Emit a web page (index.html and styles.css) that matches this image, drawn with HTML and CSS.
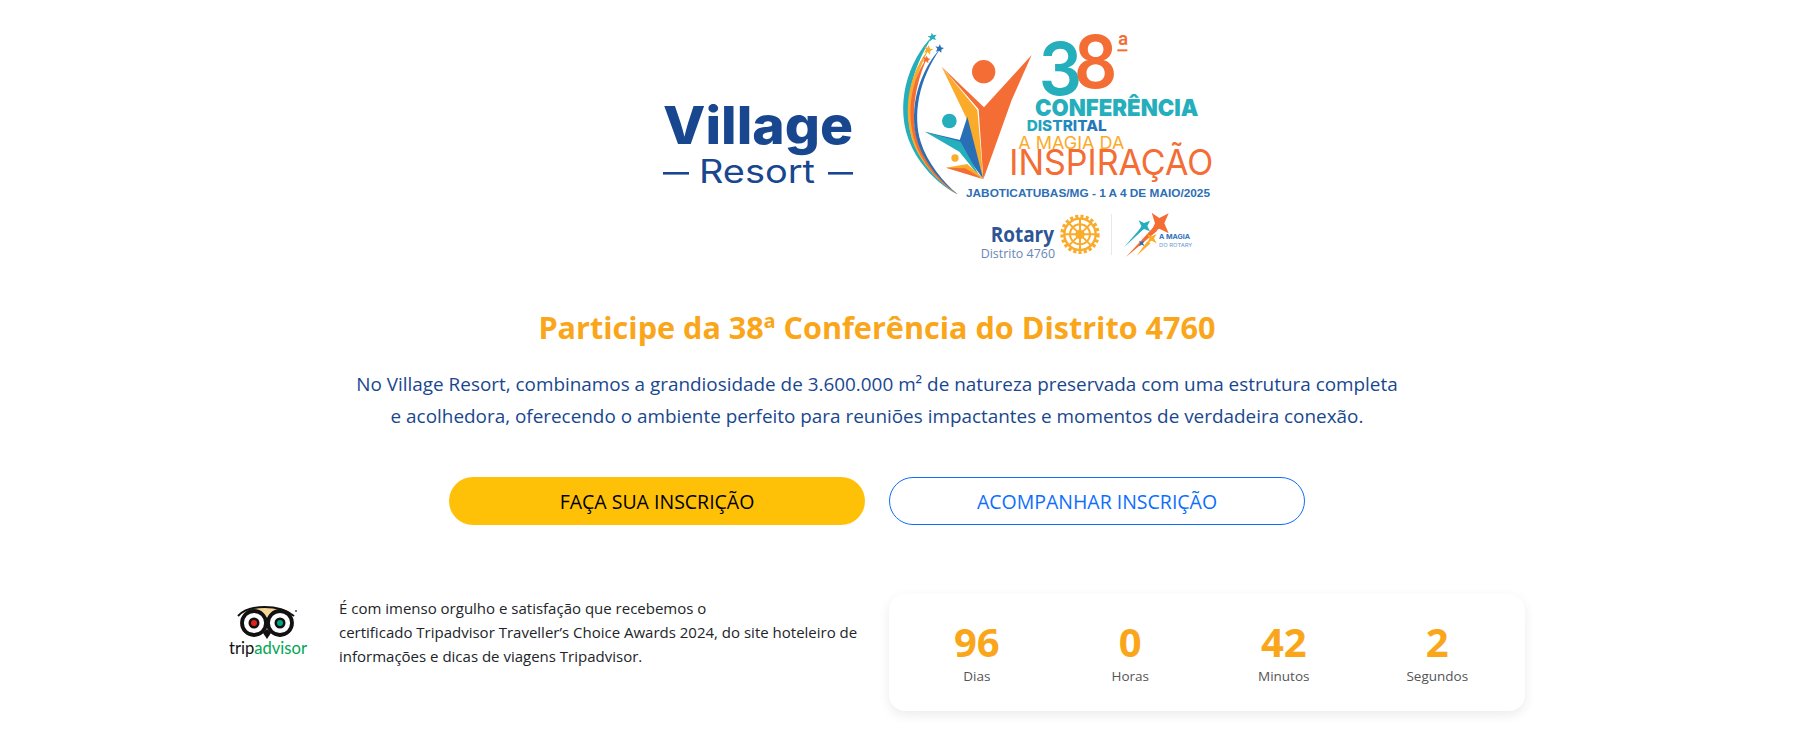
FILE: index.html
```html
<!DOCTYPE html>
<html lang="pt-BR">
<head>
<meta charset="utf-8">
<title>Village Resort</title>
<link rel="stylesheet" href="styles.css">
</head>
<body>
<main class="page">
  <header class="two-cols logos">
    <div class="col-left">
      <svg class="logo-village" viewBox="0 0 205 90" width="205" height="90">
        <text class="lv-title" x="8" y="58" textLength="190" lengthAdjust="spacingAndGlyphs">Village</text>
        <text class="lv-sub" x="44" y="97" textLength="116" lengthAdjust="spacingAndGlyphs">Resort</text>
        <rect class="lv-fill" x="8" y="86" width="26" height="2.6"/>
        <rect class="lv-fill" x="173" y="86" width="25" height="2.6"/>
      </svg>
    </div>
    <div class="col-right">
      <svg class="logo-conf" viewBox="0 0 1020 720" width="340" height="240">
        <defs>
          <linearGradient id="dist" x1="0" x2="1" y1="0" y2="0">
            <stop offset="0" stop-color="#25aebc"/><stop offset="0.55" stop-color="#1f86bd"/><stop offset="1" stop-color="#2a6fb6"/>
          </linearGradient>
        </defs>
        <path fill="#25aebc" d="M158,48 C85,120 38,260 95,380 C125,445 185,500 233,523 C175,480 122,430 98,360 C68,265 92,150 158,48Z"/>
        <path fill="#fbab2a" d="M148,85 C95,150 60,260 102,375 C130,440 185,495 233,523 C180,480 130,430 108,365 C78,275 100,175 148,85Z"/>
        <path fill="#f46d35" d="M142,112 C100,170 72,270 108,375 C130,435 185,495 233,523 C185,485 136,430 114,365 C90,285 105,195 142,112Z"/>
        <path fill="#2a6fb6" d="M182,85 C125,145 80,260 114,370 C135,430 185,490 233,523 C190,485 142,430 122,365 C98,285 115,180 182,85Z"/>
        <polygon fill="#25aebc" points="155,38 160,46 170,44 164,52 168,60 158,57 150,64 151,54 143,49 153,47"/>
        <polygon fill="#fbab2a" points="146,76 150,86 160,88 151,93 150,104 143,96 132,98 138,89 133,80 142,83"/>
        <polygon fill="#2a6fb6" points="180,73 183,82 192,84 184,89 184,98 177,92 168,95 172,86 166,79 175,81"/>
        <polygon fill="#f46d35" points="140,108 144,115 152,117 145,121 145,130 138,124 130,126 133,118 128,112 136,113"/>
        <circle cx="311" cy="155" r="35" fill="#f46d35"/>
        <circle cx="208" cy="303" r="22" fill="#25aebc"/>
        <circle cx="225" cy="414" r="11" fill="#fbab2a"/>
        <polygon fill="#f46d35" points="455,105 395,240 345,380 310,478 296,268 185,140 312,262"/>
        <polygon fill="#fbab2a" points="185,140 292,270 310,478 258,292"/>
        <polygon fill="#2a6fb6" points="262,290 310,478 238,378 240,358"/>
        <polygon fill="#2a6fb6" points="135,335 250,362 245,385"/>
        <polygon fill="#25aebc" points="135,335 242,365 300,472 238,395"/>
        <polygon fill="#fbab2a" points="198,443 262,432 310,475"/>
        <polygon fill="#f46d35" points="198,443 256,445 310,478"/>
        <text class="cf c-teal f-num" x="476" y="226" textLength="130" lengthAdjust="spacingAndGlyphs">3</text>
        <text class="cf c-orange f-num" x="582" y="204" textLength="130" lengthAdjust="spacingAndGlyphs">8</text>
        <text class="cf c-orange f-ord" x="711" y="103">ª</text>
        <rect x="712" y="88" width="30" height="6" fill="#f46d35"/>
        <text class="cf c-teal f-conf" x="465" y="287" textLength="490" lengthAdjust="spacingAndGlyphs">CONFERÊNCIA</text>
        <text class="cf f-dist" x="440" y="333" textLength="240" lengthAdjust="spacingAndGlyphs" fill="url(#dist)">DISTRITAL</text>
        <text class="cf c-yellow f-magia" x="415" y="386" textLength="318" lengthAdjust="spacingAndGlyphs">A MAGIA DA</text>
        <text class="cf c-orange f-insp" x="388" y="466" textLength="612" lengthAdjust="spacingAndGlyphs">INSPIRAÇÃO</text>
        <text class="cf f-date" x="258" y="530" textLength="732" lengthAdjust="spacingAndGlyphs">JABOTICATUBAS/MG - 1 A 4 DE MAIO/2025</text>
        <text class="cf f-rot" x="332" y="665" textLength="190" lengthAdjust="spacingAndGlyphs">Rotary</text>
        <text class="cf f-dis" x="302" y="715" textLength="223" lengthAdjust="spacingAndGlyphs">Distrito 4760</text>
        <g fill="none" stroke="#fbab2a">
          <circle cx="600" cy="643" r="52" stroke-width="14" stroke-dasharray="9 6.3" />
          <circle cx="600" cy="643" r="47" stroke-width="7"/>
          <circle cx="600" cy="643" r="30" stroke-width="6"/>
          <circle cx="600" cy="643" r="11" stroke-width="6"/>
          <path stroke-width="6" d="M600,596V690M553,643H647M567,610L633,676M633,610L567,676"/>
        </g>
        <rect x="694" y="582" width="2" height="123" fill="#ddd"/>
        <path fill="#25aebc" d="M784,622 L792,626 L732,682Z"/>
        <path fill="#f46d35" d="M820,622 L832,632 L737,712Z"/>
        <path fill="#fbab2a" d="M802,664 L812,670 L770,707Z"/>
        <polygon fill="#f46d35" points="815,578 838,594 866,580 853,610 866,640 838,626 810,642 825,610"/>
        <polygon fill="#25aebc" points="776,601 792,609 810,602 802,618 810,634 792,627 776,635 784,618"/>
        <polygon fill="#fbab2a" points="802,642 815,649 830,642 822,655 830,670 815,662 802,670 808,655"/>
        <polygon fill="#2a6fb6" points="777,662 785,666 793,662 789,670 793,678 785,674 777,678 781,670"/>
        <text class="cf f-m1" x="837" y="658" textLength="93" lengthAdjust="spacingAndGlyphs">A MAGIA</text>
        <text class="cf f-m2" x="837" y="680" textLength="100" lengthAdjust="spacingAndGlyphs">DO ROTARY</text>
      </svg>
    </div>
  </header>

  <section class="intro">
    <h1 class="title">Participe da 38ª Conferência do Distrito 4760</h1>
    <p class="lead">No Village Resort, combinamos a grandiosidade de 3.600.000 m² de natureza preservada com uma estrutura completa<br>e acolhedora, oferecendo o ambiente perfeito para reuniões impactantes e momentos de verdadeira conexão.</p>
  </section>

  <section class="two-cols actions">
    <div class="col-left"><a class="btn btn-primary" href="#">FAÇA SUA INSCRIÇÃO</a></div>
    <div class="col-right"><a class="btn btn-outline" href="#">ACOMPANHAR INSCRIÇÃO</a></div>
  </section>

  <section class="two-cols bottom">
    <div class="award">
      <svg class="ta-logo" viewBox="0 0 78 50" width="78" height="50">
        <path fill="#f6d596" d="M13,15 C22,8 48,8 62,15 L50,28 L38,34 L26,28Z"/>
        <path fill="none" stroke="#111" stroke-width="2" d="M9,19 C20,7 50,7 65,19"/>
        <circle cx="25" cy="26" r="12" fill="#fff" stroke="#111" stroke-width="3.8"/>
        <circle cx="51" cy="26" r="12" fill="#fff" stroke="#111" stroke-width="3.8"/>
        <path fill="#111" d="M34,36 L38,42 L42,36 L38,32Z"/>
        <circle cx="25" cy="26" r="5.5" fill="#111"/>
        <circle cx="51" cy="26" r="5.5" fill="#111"/>
        <circle cx="25" cy="26" r="3" fill="#e2231a"/>
        <circle cx="51" cy="26" r="3" fill="#00a680"/>
        <circle cx="67" cy="14" r="1.1" fill="#555"/>
        <text class="ta-text" x="0" y="57" textLength="78" lengthAdjust="spacingAndGlyphs"><tspan class="ta-dark">trip</tspan><tspan class="ta-green">advisor</tspan></text>
      </svg>
      <p class="award-text">É com imenso orgulho e satisfação que recebemos o<br>certificado Tripadvisor Traveller’s Choice Awards 2024, do site hoteleiro de<br>informações e dicas de viagens Tripadvisor.</p>
    </div>
    <div class="countdown-col">
      <div class="countdown">
        <div class="unit"><div class="num">96</div><div class="lbl">Dias</div></div>
        <div class="unit"><div class="num">0</div><div class="lbl">Horas</div></div>
        <div class="unit"><div class="num">42</div><div class="lbl">Minutos</div></div>
        <div class="unit"><div class="num">2</div><div class="lbl">Segundos</div></div>
      </div>
    </div>
  </section>
</main>
</body>
</html>
```
FILE: styles.css
```css
* { box-sizing: border-box; }
html, body { margin: 0; padding: 0; background: #fff; }
body { font-family: "Open Sans", "Noto Sans", sans-serif; color: #212529; height: 748px; overflow: hidden; }
.page { width: 1320px; margin-left: 217px; padding-top: 20px; }
.two-cols { display: grid; grid-template-columns: 660px 660px; }
.col-left { display: flex; justify-content: flex-end; padding-right: 12px; }
.col-right { display: flex; justify-content: flex-start; padding-left: 12px; }

.logos { height: 240px; }
.logos .col-left { padding-right: 17px; align-items: flex-start; }
.logos .col-right { padding-left: 3px; }
.logo-village { margin-top: 66px; overflow: visible; }
.logo-conf { display: block; overflow: visible; }
.lv-title { font: 800 52px Inter, sans-serif; fill: #19478f; }
.lv-sub { font: 400 32px Inter, sans-serif; fill: #19478f; }
.lv-fill { fill: #19478f; }
.cf { font-family: Inter, sans-serif; }
.c-teal { fill: #25aebc; }
.c-orange { fill: #f46d35; }
.c-yellow { fill: #fbab2a; }
.f-num { font-size: 218px; font-weight: 600; }
.f-ord { font-size: 80px; font-weight: 500; }
.f-conf { font-size: 70px; font-weight: 900; }
.f-dist { font-size: 45px; font-weight: 800; }
.f-magia { font-size: 52px; font-weight: 400; }
.f-insp { font-size: 106px; font-weight: 400; }
.f-date { font-family: "Liberation Sans", sans-serif; font-size: 34px; font-weight: 700; fill: #2c6fb5; }
.f-rot { font-family: "Open Sans", sans-serif; font-size: 64px; font-weight: 700; fill: #2e5596; }
.f-dis { font-family: "Open Sans", sans-serif; font-size: 37px; font-weight: 400; fill: #6a86b8; }
.f-m1 { font-size: 18px; font-weight: 700; fill: #2a6fb6; }
.f-m2 { font-size: 15px; font-weight: 400; fill: #6a9ad0; }

.intro { text-align: center; padding-top: 46px; }
.title { margin: 0; font-size: 30.6px; line-height: 42px; font-weight: 700; color: #faa61a; }
.lead { margin: 20px 0 0; font-size: 18.9px; line-height: 32px; color: #19478f; }

.actions { margin-top: 45px; }
.btn { display: flex; align-items: center; justify-content: center; width: 416px; height: 48px; border-radius: 24px; font-size: 19.5px; text-decoration: none; }
.btn-primary { background: #ffc107; color: #000; }
.btn-outline { background: #fff; color: #0d6efd; border: 1px solid #0d6efd; }

.bottom { margin-top: 69px; }
.award { display: flex; gap: 32px; padding: 2px 12px 0; align-items: flex-start; }
.ta-logo { flex: none; display: block; margin-top: 1px; overflow: visible; }
.ta-text { font: 400 18px Lato, sans-serif; }
.ta-dark { fill: #111; }
.ta-green { fill: #00a651; }
.award-text { margin: 0; font-size: 15px; line-height: 24px; color: #212529; white-space: nowrap; }
.countdown-col { padding: 0 12px; }
.countdown { display: grid; grid-template-columns: repeat(4, 1fr); padding: 24px 11px 0; height: 117px; background: #fff; border-radius: 16px; box-shadow: 0 4px 12px rgba(0, 0, 0, .08); text-align: center; }
.num { font-size: 40px; line-height: 48px; font-weight: 700; color: #faa61a; }
.lbl { font-size: 13.5px; line-height: 20px; color: #555; }
```
